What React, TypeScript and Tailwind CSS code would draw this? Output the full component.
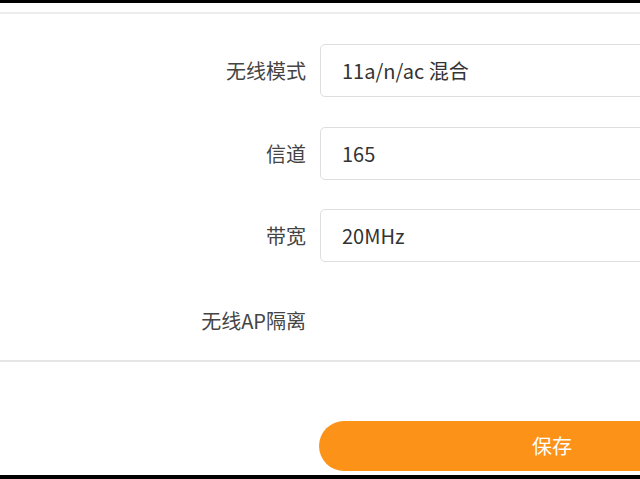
import React from "react";

const FONT = { fontFamily: '"Microsoft YaHei", "Noto Sans CJK SC", "Noto Sans", sans-serif' };

const ROWS = [
  { label: "无线模式", value: "11a/n/ac 混合", mt: "mt-[30px]" },
  { label: "信道", value: "165", mt: "mt-[30px]" },
  { label: "带宽", value: "20MHz", mt: "mt-[29px]" },
];

function Row({ label, value, mt }: { label: string; value?: string; mt: string }) {
  return (
    <div className={`flex items-center h-[53px] shrink-0 ${mt}`}>
      <div className="w-[306px] shrink-0 text-right text-[20px] text-[#444]">{label}</div>
      {value !== undefined && (
        <div className="ml-[14px] w-[400px] shrink-0 h-[53px] flex items-center pl-[21px] border border-[#dedede] rounded-[5px] text-[20px] text-[#333]">
          {value}
        </div>
      )}
    </div>
  );
}

export default function App() {
  return (
    <div className="w-[640px] h-[479px] overflow-hidden bg-white flex flex-col" style={FONT}>
      <div className="h-[3px] bg-black shrink-0" />
      <div className="h-[2px] mt-[9px] bg-[#ececec] shrink-0" />
      {ROWS.map((r) => (
        <Row key={r.label} {...r} />
      ))}
      <Row label="无线AP隔离" mt="mt-[32px]" />
      <div className="h-[2px] mt-[13px] bg-[#e6e6e6] shrink-0" />
      <div className="mt-[59px] pl-[319px] shrink-0">
        <button className="w-[466px] h-[50px] rounded-full bg-[#fc9218] text-white text-[20px] flex items-center justify-center">
          保存
        </button>
      </div>
      <div className="mt-[4px] h-[4px] bg-black shrink-0" />
    </div>
  );
}
